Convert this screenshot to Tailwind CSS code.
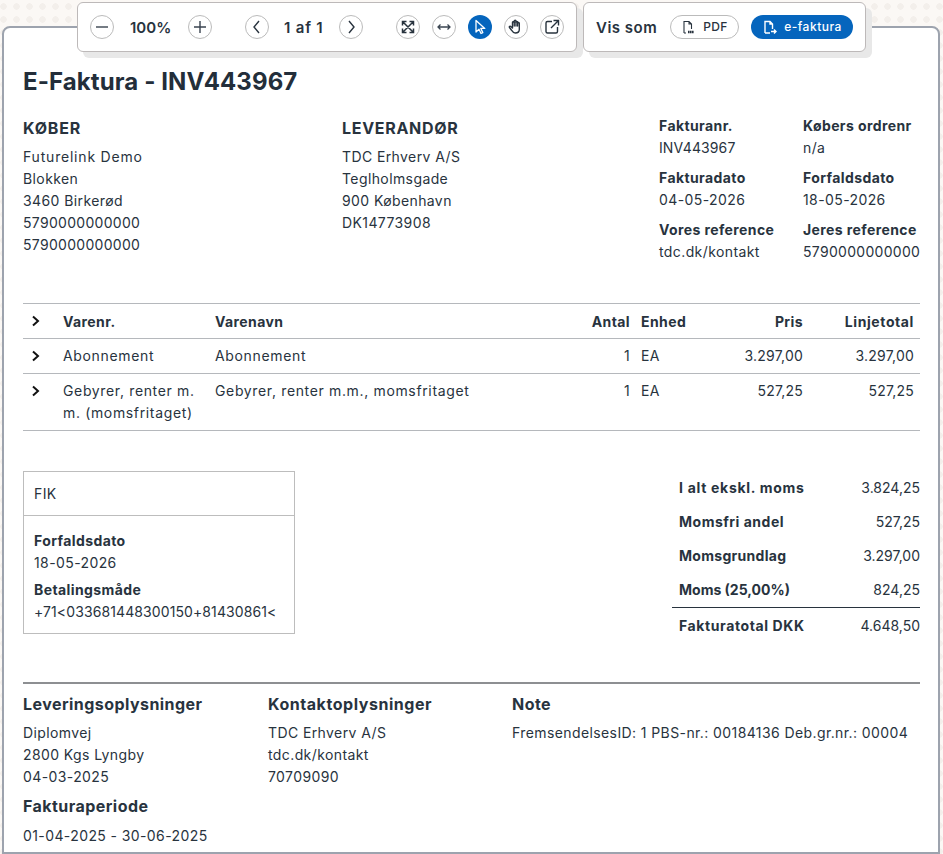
<!DOCTYPE html>
<html lang="en">
<head>
  <meta charset="UTF-8" />
  <title>E-Faktura</title>
  <script src="https://cdn.jsdelivr.net/npm/@tailwindcss/browser@4"></script>
</head>
<body class="h-[854px] w-[943px] overflow-hidden bg-[#fbf8f5] font-['Inter',sans-serif] text-[14px] leading-[22px] tracking-[0.4px] text-[#28333e]">
  <div class="relative h-full bg-[radial-gradient(circle,#f3efeb_3px,transparent_3.5px)] bg-[size:13px_13px] bg-[position:-3px_0px]">

    <!-- Toolbars -->
    <div class="absolute left-[77px] top-[2px] z-10 flex tracking-normal">
      <div class="flex h-[50px] w-[500px] items-center rounded-md border border-[#bdb9b9] bg-white pl-[12px] shadow-[6px_6px_0_0_#e8e8e8]">
        <button class="flex size-6 items-center justify-center rounded-full border border-[#bbb]"><svg class="size-4" viewBox="0 0 16 16" fill="none" stroke="#3a4450" stroke-width="1.4"><path d="M2 8h12"/></svg></button>
        <span class="ml-[16px] w-[42px] pt-[1px] text-[15px] font-semibold">100%</span>
        <button class="ml-[16px] flex size-6 items-center justify-center rounded-full border border-[#bbb]"><svg class="size-4" viewBox="0 0 16 16" fill="none" stroke="#3a4450" stroke-width="1.4"><path d="M2 8h12M8 2v12"/></svg></button>
        <button class="ml-[33px] flex size-6 items-center justify-center rounded-full border border-[#bbb]"><svg class="size-4" viewBox="0 0 16 16" fill="none" stroke="#28333e" stroke-width="1.4"><path d="M10 2 5 8l5 6"/></svg></button>
        <span class="ml-[15px] w-[40px] whitespace-nowrap pt-[1px] text-[15px] font-semibold tracking-[0.8px]">1 af 1</span>
        <button class="ml-[15px] flex size-6 items-center justify-center rounded-full border border-[#bbb]"><svg class="size-4" viewBox="0 0 16 16" fill="none" stroke="#28333e" stroke-width="1.4"><path d="m6 2 5 6-5 6"/></svg></button>
        <button class="ml-[33px] flex size-6 items-center justify-center rounded-full border border-[#bbb]"><svg class="size-4" viewBox="0 0 16 16" fill="none" stroke="#28333e" stroke-width="1.5"><path d="M2.500 6.500v-4h4M13.500 6.500v-4h-4M2.500 9.500v4h4M13.500 9.500v4h-4M3 3l10 10M13 3 3 13"/></svg></button>
        <button class="ml-[12px] flex size-6 items-center justify-center rounded-full border border-[#bbb]"><svg class="size-4" viewBox="0 0 16 16" fill="none" stroke="#3a4450" stroke-width="1.3"><path d="M2 8h12M4.500 5.500 2 8l2.500 2.500M11.500 5.500 14 8l-2.500 2.500"/></svg></button>
        <button class="ml-[12px] flex size-6 items-center justify-center rounded-full bg-[#0565bd]"><svg class="size-[18px]" viewBox="0 0 18 18" fill="#0565bd" stroke="white" stroke-width="1.300" stroke-linejoin="round"><path d="M5 2.500v11.500l3-2.800 2 4.300 1.800-.9-2-4.200h4z"/></svg></button>
        <button class="ml-[12px] flex size-6 items-center justify-center rounded-full border border-[#bbb]"><svg class="size-[18px]" viewBox="0 0 18 18" fill="none" stroke="#28333e" stroke-width="1.4" stroke-linejoin="round" stroke-linecap="round"><path d="M4 11.500 2.500 9.500c-.6-1 .6-1.800 1.400-1L5.500 10V4.500c0-1.200 1.700-1.200 1.700 0V3.200c0-1.200 1.800-1.200 1.800 0v1c0-1.100 1.700-1.100 1.700 0v1c0-1 1.600-1 1.600.1V11.500c0 2.500-1.800 3.500-4 3.500s-3-1.500-4.300-3.500z"/><path d="M7.200 4.500V8M9 4v4M10.700 5v3"/></svg></button>
        <button class="ml-[12px] flex size-6 items-center justify-center rounded-full border border-[#bbb]"><svg class="size-[18px]" viewBox="0 0 18 18" fill="none" stroke="#28333e" stroke-width="1.4"><path d="M9 3.500H4.500a1.500 1.500 0 0 0-1.500 1.500v8.500A1.500 1.500 0 0 0 4.500 15H13a1.500 1.500 0 0 0 1.500-1.500V9M8 10l7-7M10.500 2.500H15.500V7.500"/></svg></button>
      </div>
      <div class="ml-[6px] flex h-[50px] w-[283px] items-center rounded-md border border-[#bdb9b9] bg-white pl-[12px] shadow-[6px_6px_0_0_#e8e8e8]">
        <span class="w-[62px] pt-[1px] text-[15px] font-semibold tracking-[0.5px]">Vis som</span>
        <button class="ml-[12px] flex h-6 w-[69px] items-center justify-center gap-[7px] rounded-full border border-[#bbb] text-[12px] font-medium tracking-[0.3px]">
          <svg class="size-[15px]" viewBox="0 0 15 15" fill="none" stroke="#28333e" stroke-width="1.100"><path d="M3 13V1.500h5l2.500 2.500v5M8 1.500V4h2.500M3 13h2"/><path d="M7 12h6" stroke-width="2.500" stroke-dasharray="1.600 .4"/></svg>PDF
        </button>
        <button class="ml-[12px] flex h-6 w-[102px] items-center justify-center gap-[7px] rounded-full bg-[#0565bd] text-[12px] font-medium tracking-[0.5px] text-white">
          <svg class="size-[15px]" viewBox="0 0 15 15" fill="none" stroke="white" stroke-width="1.400"><path d="M3 13V1.500h5l2.500 2.500v5M8 1.500V4h2.500M3 13h5M9 11.500h5M12 9.500l2 2-2 2"/></svg>e-faktura
        </button>
      </div>
    </div>

    <!-- Document -->
    <main class="absolute left-[2px] top-[26px] h-[828px] w-[938px] rounded-t-lg border-2 border-[#9da3ae] bg-white pl-[19px] pr-[18px] pt-[39px]">
      <h1 class="text-[24px] font-bold leading-[30px] tracking-[0.1px] text-[#232e3a]">E-Faktura - INV443967</h1>

      <section class="mt-[19px] flex h-[187px] items-start">
        <div class="w-[319px] shrink-0">
          <h2 class="text-[16px] font-bold leading-[24px] tracking-[0.8px]">KØBER</h2>
          <div class="mt-[6px]"><span class="tracking-[0.8px]">Futurelink Demo</span><br />Blokken<br />3460 Birkerød<br /><span class="tracking-[0.3px]">5790000000000</span><br /><span class="tracking-[0.3px]">5790000000000</span></div>
        </div>
        <div class="w-[317px] shrink-0">
          <h2 class="text-[16px] font-bold leading-[24px] tracking-[0.7px]">LEVERANDØR</h2>
          <div class="mt-[6px]">TDC Erhverv A/S<br />Teglholmsgade<br />900 København<br />DK14773908</div>
        </div>
        <div class="-mt-[1px] grid shrink-0 grid-cols-[144px_117px] gap-y-[8px] whitespace-nowrap leading-[22px]">
          <div><b class="block font-bold">Fakturanr.</b><span class="tracking-[0.1px]">INV443967</span></div>
          <div><b class="block font-bold">Købers ordrenr</b>n/a</div>
          <div><b class="block font-bold">Fakturadato</b>04-05-2026</div>
          <div><b class="block font-bold">Forfaldsdato</b>18-05-2026</div>
          <div><b class="block font-bold">Vores reference</b>tdc.dk/kontakt</div>
          <div><b class="block font-bold">Jeres reference</b><span class="tracking-[0.3px]">5790000000000</span></div>
        </div>
      </section>

      <!-- Lines table -->
      <table class="w-[897px] table-fixed border-collapse">
        <colgroup><col class="w-[40px]" /><col class="w-[152px]" /><col class="w-[360px]" /><col class="w-[55px]" /><col class="w-[60px]" /><col class="w-[113px]" /><col class="w-[117px]" /></colgroup>
        <thead>
          <tr class="h-[35px] border-y border-[#b5b8bc] font-bold">
            <td class="pl-[7px]"><svg class="size-3" viewBox="0 0 12 12" fill="none" stroke="#111" stroke-width="2"><path d="m3 1.500 5 4.500-5 4.500"/></svg></td>
            <td class="pt-[1px]">Varenr.</td><td class="pt-[1px]">Varenavn</td><td class="pt-[1px] text-right">Antal</td><td class="pl-[11px] pt-[1px]">Enhed</td><td class="pt-[1px] text-right">Pris</td><td class="pr-[6px] pt-[1px] text-right tracking-[0.6px]">Linjetotal</td>
          </tr>
        </thead>
        <tbody>
          <tr class="h-[35px] border-b border-[#b5b8bc]">
            <td class="pl-[7px]"><svg class="size-3" viewBox="0 0 12 12" fill="none" stroke="#111" stroke-width="2"><path d="m3 1.500 5 4.500-5 4.500"/></svg></td>
            <td class="tracking-[0.65px]">Abonnement</td><td class="tracking-[0.65px]">Abonnement</td><td class="text-right">1</td><td class="pl-[11px]">EA</td><td class="text-right tracking-[0.2px]">3.297,00</td><td class="pr-[6px] text-right tracking-[0.2px]">3.297,00</td>
          </tr>
          <tr class="h-[57px] border-b border-[#b5b8bc] align-top">
            <td class="pl-[7px] pt-[6px]"><svg class="mt-[5px] size-3" viewBox="0 0 12 12" fill="none" stroke="#111" stroke-width="2"><path d="m3 1.500 5 4.500-5 4.500"/></svg></td>
            <td class="pt-[6px] tracking-[0.65px]">Gebyrer, renter m.<br />m. (momsfritaget)</td><td class="pt-[6px] tracking-[0.65px]">Gebyrer, renter m.m., momsfritaget</td><td class="pt-[6px] text-right">1</td><td class="pl-[11px] pt-[6px]">EA</td><td class="pt-[6px] text-right tracking-[0.2px]">527,25</td><td class="pr-[6px] pt-[6px] text-right tracking-[0.2px]">527,25</td>
          </tr>
        </tbody>
      </table>

      <!-- Payment and totals -->
      <section class="mt-[40px] flex h-[211px] items-start justify-between">
        <div class="w-[272px] border border-[#bdbdbd]">
          <div class="h-[44px] border-b border-[#bdbdbd] px-[10px] pt-[11px]">FIK</div>
          <div class="px-[10px] pb-[10px] pt-[14px]">
            <b class="block font-bold">Forfaldsdato</b>18-05-2026
            <b class="mt-[5px] block font-bold">Betalingsmåde</b><span class="tracking-[0.1px]">+71&lt;033681448300150+81430861&lt;</span>
          </div>
        </div>
        <div class="w-[248px] pt-[6px]">
          <div class="flex h-[34px] justify-between pl-[7px]"><b class="font-bold tracking-[0.7px]">I alt ekskl. moms</b><span class="tracking-normal">3.824,25</span></div>
          <div class="flex h-[34px] justify-between pl-[7px]"><b class="font-bold tracking-[0.5px]">Momsfri andel</b><span class="tracking-normal">527,25</span></div>
          <div class="flex h-[34px] justify-between pl-[7px]"><b class="font-bold tracking-[0.3px]">Momsgrundlag</b><span class="tracking-normal">3.297,00</span></div>
          <div class="flex h-[29px] justify-between border-b border-[#28333e] pl-[7px]"><b class="font-bold tracking-normal">Moms (25,00%)</b><span class="tracking-normal">824,25</span></div>
          <div class="flex justify-between pl-[7px] pt-[7px]"><b class="font-bold tracking-[0.6px]">Fakturatotal DKK</b><span class="tracking-normal">4.648,50</span></div>
        </div>
      </section>

      <!-- Footer info -->
      <section class="flex border-t-2 border-[#8d8f92] pt-[8px]">
        <div class="w-[245px]">
          <h2 class="text-[16px] font-bold leading-[24px] tracking-[0.45px]">Leveringsoplysninger</h2>
          <div class="mt-[6px]">Diplomvej<br />2800 Kgs Lyngby<br />04-03-2025</div>
          <h2 class="mt-[6px] text-[16px] font-bold leading-[24px] tracking-[0.45px]">Fakturaperiode</h2>
          <div class="mt-[7px]">01-04-2025 - 30-06-2025</div>
        </div>
        <div class="w-[244px]">
          <h2 class="text-[16px] font-bold leading-[24px] tracking-[0.55px]">Kontaktoplysninger</h2>
          <div class="mt-[6px]">TDC Erhverv A/S<br />tdc.dk/kontakt<br />70709090</div>
        </div>
        <div>
          <h2 class="text-[16px] font-bold leading-[24px] tracking-[0.45px]">Note</h2>
          <div class="mt-[6px]">FremsendelsesID: 1 PBS-nr.: 00184136 Deb.gr.nr.: 00004</div>
        </div>
      </section>
    </main>
  </div>
</body>
</html>
